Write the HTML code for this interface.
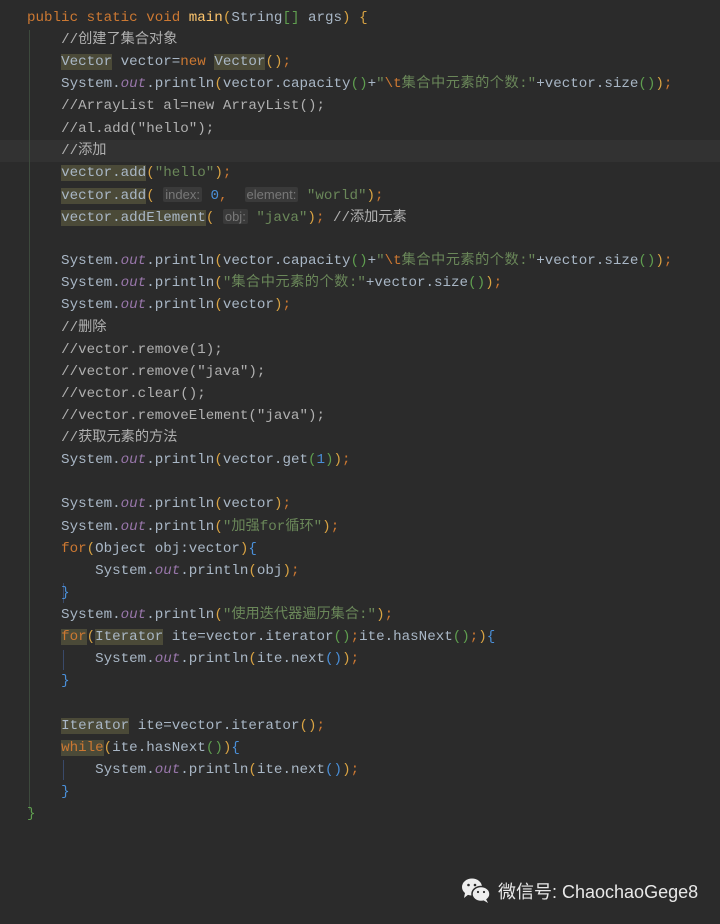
<!DOCTYPE html><html><head><meta charset="utf-8"><style>
body{margin:0;width:720px;height:924px;background:#2b2b2b;overflow:hidden;position:relative}
.c{position:absolute;left:27px;top:7px;font-family:"Liberation Mono","Noto Sans CJK SC",monospace;font-size:14.2px;line-height:22.11px;color:#a9b7c6}
.l{height:22.11px;white-space:pre}
.z{letter-spacing:0.5px}
.k{color:#cc7832}.s{color:#6a8759}.o{color:#9876aa;font-style:italic}.m{color:#ffc66d}.cm{color:#b0b0b0}
.y{color:#d9a343}.g{color:#5f9e4f}.b{color:#4a8fd8}
.h{background:#4b4a38}
.p{background:#3a3a3a;color:#787878;font-family:"Liberation Sans",sans-serif;font-size:13px;padding:0 2px;border-radius:2px}
.cur{position:absolute;left:0;top:140px;width:720px;height:22px;background:#323232}
.gd{position:absolute;width:1px;background:#3d4a3d}
.wm{position:absolute;left:461px;top:877px;color:#e8e8e8;font-family:"Liberation Sans","Noto Sans CJK SC",sans-serif;font-size:18px;display:flex;align-items:center;gap:5px}
</style></head><body>
<div class="cur"></div>
<div class="gd" style="left:29px;top:30px;height:780px"></div>
<div class="gd" style="left:63px;top:583px;height:20px;background:#3a4a6a"></div>
<div class="gd" style="left:63px;top:650px;height:20px;background:#3a4a6a"></div>
<div class="gd" style="left:63px;top:760px;height:20px;background:#3a4a6a"></div>
<div class="c"><div class="l"><span class="k">public static void </span><span class="m">main</span><span class="y">(</span>String<span class="g">[]</span> args<span class="y">)</span> <span class="y">{</span></div><div class="l">    <span class="cm">//创建了集合对象</span></div><div class="l">    <span class="h">Vector</span> vector=<span class="k">new </span><span class="h">Vector</span><span class="y">()</span><span class="k">;</span></div><div class="l">    System.<span class="o">out</span>.println<span class="y">(</span>vector.capacity<span class="g">()</span>+<span class="s">"<span class="k">\t</span><span class="z">集合中元素的个数</span>:"</span>+vector.size<span class="g">()</span><span class="y">)</span><span class="k">;</span></div><div class="l">    <span class="cm">//ArrayList al=new ArrayList();</span></div><div class="l">    <span class="cm">//al.add("hello");</span></div><div class="l">    <span class="cm">//添加</span></div><div class="l">    <span class="h">vector.add</span><span class="y">(</span><span class="s">"hello"</span><span class="y">)</span><span class="k">;</span></div><div class="l">    <span class="h">vector.add</span><span class="y">(</span> <span class="p">index:</span> <span class="b">0</span><span class="k">,</span>  <span class="p">element:</span> <span class="s">"world"</span><span class="y">)</span><span class="k">;</span></div><div class="l">    <span class="h">vector.addElement</span><span class="y">(</span> <span class="p">obj:</span> <span class="s">"java"</span><span class="y">)</span><span class="k">;</span> <span class="cm">//添加元素</span></div><div class="l"></div><div class="l">    System.<span class="o">out</span>.println<span class="y">(</span>vector.capacity<span class="g">()</span>+<span class="s">"<span class="k">\t</span><span class="z">集合中元素的个数</span>:"</span>+vector.size<span class="g">()</span><span class="y">)</span><span class="k">;</span></div><div class="l">    System.<span class="o">out</span>.println<span class="y">(</span><span class="s">"<span class="z">集合中元素的个数</span>:"</span>+vector.size<span class="g">()</span><span class="y">)</span><span class="k">;</span></div><div class="l">    System.<span class="o">out</span>.println<span class="y">(</span>vector<span class="y">)</span><span class="k">;</span></div><div class="l">    <span class="cm">//删除</span></div><div class="l">    <span class="cm">//vector.remove(1);</span></div><div class="l">    <span class="cm">//vector.remove("java");</span></div><div class="l">    <span class="cm">//vector.clear();</span></div><div class="l">    <span class="cm">//vector.removeElement("java");</span></div><div class="l">    <span class="cm">//获取元素的方法</span></div><div class="l">    System.<span class="o">out</span>.println<span class="y">(</span>vector.get<span class="g">(</span><span class="b">1</span><span class="g">)</span><span class="y">)</span><span class="k">;</span></div><div class="l"></div><div class="l">    System.<span class="o">out</span>.println<span class="y">(</span>vector<span class="y">)</span><span class="k">;</span></div><div class="l">    System.<span class="o">out</span>.println<span class="y">(</span><span class="s">"加强for循环"</span><span class="y">)</span><span class="k">;</span></div><div class="l">    <span class="k">for</span><span class="y">(</span>Object obj:vector<span class="y">)</span><span class="b">{</span></div><div class="l">        System.<span class="o">out</span>.println<span class="y">(</span>obj<span class="y">)</span><span class="k">;</span></div><div class="l">    <span class="b">}</span></div><div class="l">    System.<span class="o">out</span>.println<span class="y">(</span><span class="s">"使用迭代器遍历集合:"</span><span class="y">)</span><span class="k">;</span></div><div class="l">    <span class="k h">for</span><span class="y">(</span><span class="h">Iterator</span> ite=vector.iterator<span class="g">()</span><span class="k">;</span>ite.hasNext<span class="g">()</span><span class="k">;</span><span class="y">)</span><span class="b">{</span></div><div class="l">        System.<span class="o">out</span>.println<span class="y">(</span>ite.next<span class="b">()</span><span class="y">)</span><span class="k">;</span></div><div class="l">    <span class="b">}</span></div><div class="l"></div><div class="l">    <span class="h">Iterator</span> ite=vector.iterator<span class="y">()</span><span class="k">;</span></div><div class="l">    <span class="k h">while</span><span class="y">(</span>ite.hasNext<span class="g">()</span><span class="y">)</span><span class="b">{</span></div><div class="l">        System.<span class="o">out</span>.println<span class="y">(</span>ite.next<span class="b">()</span><span class="y">)</span><span class="k">;</span></div><div class="l">    <span class="b">}</span></div><div class="l"><span class="g">}</span></div></div>
<div class="wm"><svg width="32" height="28" viewBox="0 0 32 28"><ellipse cx="11" cy="10" rx="10" ry="8.5" fill="#eee"/><path d="M4 16 L3 21 L8 17Z" fill="#eee"/><ellipse cx="20" cy="17" rx="9" ry="7.5" fill="#eee" stroke="#2b2b2b" stroke-width="1.5"/><path d="M25 22 L27 26 L22 23Z" fill="#eee"/><circle cx="7.5" cy="8" r="1.3" fill="#2b2b2b"/><circle cx="14" cy="8" r="1.3" fill="#2b2b2b"/><circle cx="17" cy="15" r="1.1" fill="#2b2b2b"/><circle cx="23" cy="15" r="1.1" fill="#2b2b2b"/></svg><span>微信号: ChaochaoGege8</span></div>
</body></html>
